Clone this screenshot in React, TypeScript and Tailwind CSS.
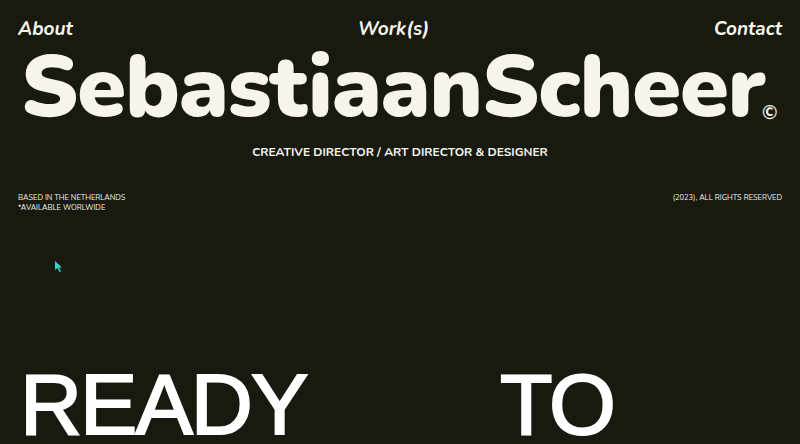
const font = { fontFamily: "Nunito, Lato, 'Open Sans', sans-serif" }

const App = () => {
  return (
    <div
      className="relative h-[444px] w-[800px] overflow-hidden bg-[#18190f] text-[#f7f5ea]"
      style={font}
    >
      <nav className="grid grid-cols-3 px-[18px] pt-[17px] text-[19px] font-bold italic leading-[24px]">
        <a className="justify-self-start">About</a>
        <a className="justify-self-center pr-[13px]">Work(s)</a>
        <a className="justify-self-end">Contact</a>
      </nav>

      <div className="flex items-end pl-[21px] pt-[3px]">
        <h1 className="text-[88px] font-black leading-[86px] tracking-[-1px]">SebastiaanScheer</h1>
        <span className="mb-[7px] ml-[-3px] text-[19px] font-bold leading-none">©</span>
      </div>

      <p className="mt-[15px] text-center text-[12px] font-bold leading-[14px]">
        CREATIVE DIRECTOR / ART DIRECTOR &amp; DESIGNER
      </p>

      <div className="mt-[34px] flex justify-between px-[18px] text-[7.5px] leading-[10px]">
        <div>
          <p>BASED IN THE NETHERLANDS</p>
          <p>*AVAILABLE WORLWIDE</p>
        </div>
        <p>(2023), ALL RIGHTS RESERVED</p>
      </div>

      <svg className="absolute left-[55px] top-[261px]" width="8" height="11" viewBox="0 0 8 11">
        <path d="M0 0 L0 9 L2.5 7 L4.5 11 L6 10.3 L4 6.5 L7 6.5 Z" fill="#33d6c4" />
      </svg>

      <div
        className="mt-[151px] flex pl-[20px] text-[86px] leading-[80px] tracking-[-2px] text-white [-webkit-text-stroke:2px_white]"
        style={{ fontFamily: "'Liberation Sans', Arial, sans-serif" }}
      >
        <span className="w-[480px]">READY</span>
        <span>TO</span>
      </div>
    </div>
  )
}

export default App
